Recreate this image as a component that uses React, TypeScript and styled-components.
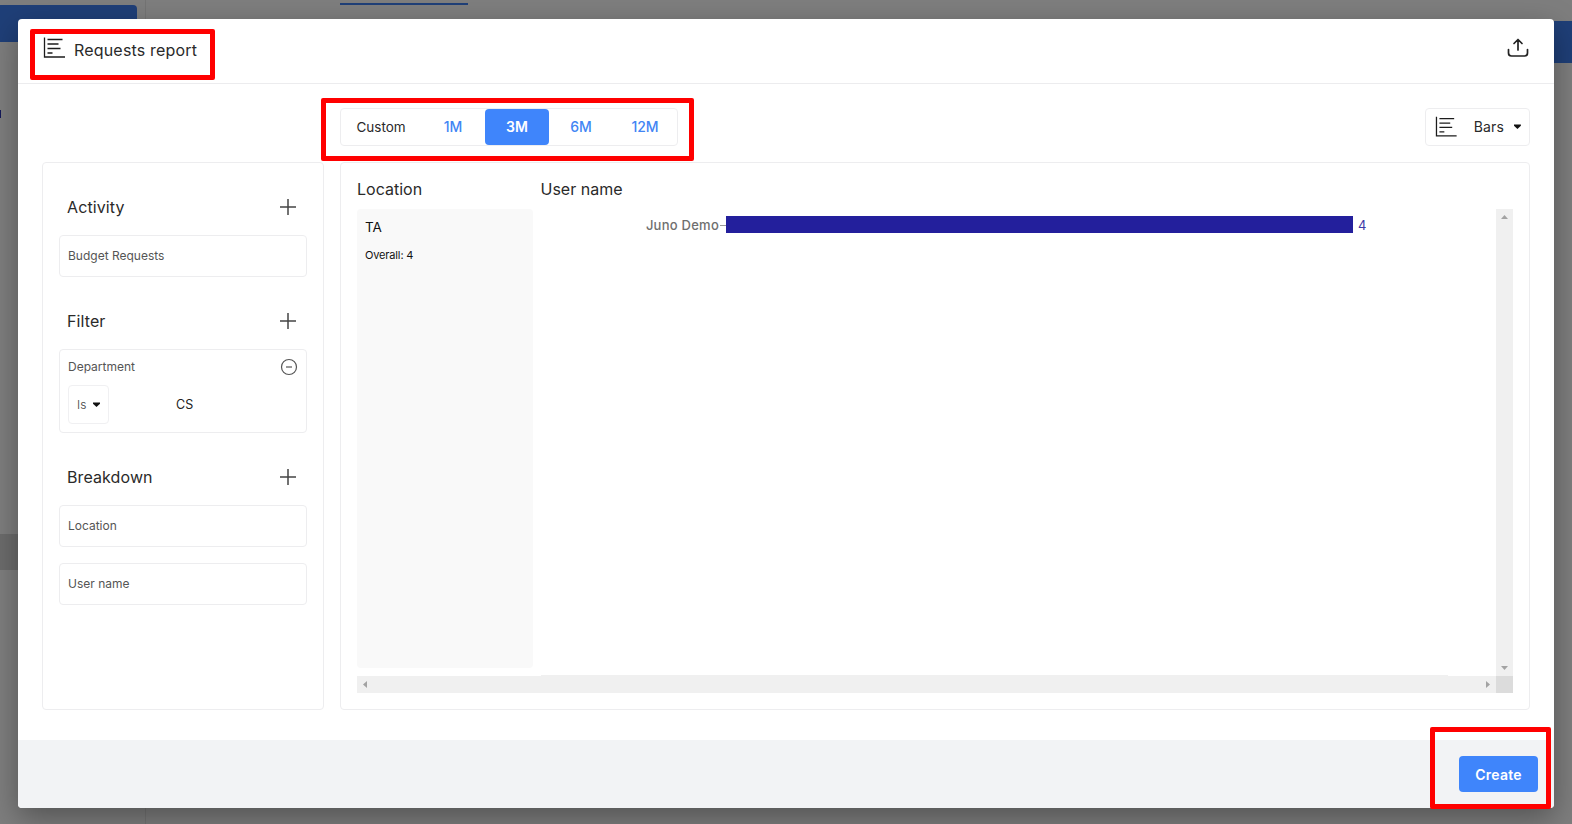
import React from "react";
import styled, { createGlobalStyle } from "styled-components";

const Global = createGlobalStyle`
  html, body { margin: 0; padding: 0; height: 100%; overflow: hidden; }
  body { font-family: Inter, "Liberation Sans", sans-serif; background: #7b7b7b; }
  * { box-sizing: border-box; }
`;

const Page = styled.div`
  position: relative;
  width: 1572px;
  height: 824px;
  display: flex;
  overflow: hidden;
  background: #7e7e7e;
`;
const BackSide = styled.div`
  width: 146px;
  height: 100%;
  padding-top: 5px;
  border-right: 1px solid #747474;
  flex: none;
  display: flex;
  flex-direction: column;
`;
const BackButton = styled.div`
  width: 137px;
  height: 37px;
  background: #1f3f78;
  border-radius: 0 4px 0 0;
`;
const BackDot = styled.div`
  width: 1px;
  height: 8px;
  margin-top: 68px;
  background: #141a5a;
`;
const BackBand = styled.div`
  margin-top: 416px;
  height: 36px;
  background: #6c6c6c;
`;
const BackMain = styled.div`
  flex: 1;
  padding: 3px 0 0 194px;
  display: flex;
  justify-content: space-between;
`;
const BackTab = styled.div`
  width: 128px;
  height: 2px;
  background: #1f3f78;
`;
const BackStrip = styled.div`
  width: 18px;
  height: 42px;
  margin-top: 18px;
  background: #1f3f78;
`;

const Overlay = styled.div`
  position: absolute;
  inset: 0;
  padding: 19px 18px 16px 18px;
  display: flex;
`;
const Modal = styled.div`
  width: 1536px;
  height: 789px;
  background: #fff;
  border-radius: 4px;
  box-shadow: 0 10px 30px rgba(0, 0, 0, 0.34);
  display: flex;
  flex-direction: column;
  overflow: hidden;
`;
const Header = styled.header`
  height: 65px;
  flex: none;
  border-bottom: 1px solid #ececee;
  padding: 0 25px 1px 25px;
  display: flex;
  align-items: center;
  justify-content: space-between;
`;
const TitleGroup = styled.div`
  display: flex;
  align-items: center;
  gap: 9px;
  margin-top: -2px;
`;
const TitleIcon = styled.span`
  display: flex;
  margin-top: -4px;
`;
const UploadButton = styled.span`
  display: flex;
  margin-top: -6px;
`;
const Title = styled.h1`
  margin: 0;
  font-size: 16px;
  font-weight: 400;
  letter-spacing: 0.18px;
  color: #2a2a2a;
`;
const Body = styled.main`
  flex: 1;
  padding: 24px 24px 30px 24px;
  display: flex;
  flex-direction: column;
  min-height: 0;
`;
const Controls = styled.div`
  height: 38px;
  flex: none;
  padding-left: 298px;
  display: flex;
  justify-content: space-between;
`;
const Toggle = styled.div`
  width: 338px;
  height: 38px;
  border: 1px solid #ededef;
  border-radius: 4px;
  display: flex;
`;
const ToggleItem = styled.div<{ $active?: boolean; $plain?: boolean }>`
  width: 64px;
  height: 36px;
  padding-bottom: 1px;
  display: flex;
  align-items: center;
  justify-content: center;
  font-size: 14px;
  font-weight: ${(p) => (p.$active ? 600 : 500)};
  border-radius: 4px;
  color: ${(p) => (p.$active ? "#fff" : p.$plain ? "#2a2a2a" : "#4285f4")};
  background: ${(p) => (p.$active ? "#3f85fb" : "transparent")};
  &:first-child { width: 80px; font-weight: 400; font-size: 13.5px; }
`;
const BarsSelect = styled.div`
  width: 105px;
  height: 38px;
  border: 1px solid #ededef;
  border-radius: 4px;
  padding: 0 8px 1px 9px;
  display: flex;
  align-items: center;
  font-size: 14px;
  letter-spacing: 0.2px;
  color: #2a2a2a;
`;
const BarsLabel = styled.span`
  margin-left: 17px;
  margin-right: 10px;
`;
const Columns = styled.div`
  margin-top: 16px;
  flex: 1;
  min-height: 0;
  display: flex;
  gap: 16px;
`;
const Card = styled.section`
  border: 1px solid #ededef;
  border-radius: 4px;
`;
const Sidebar = styled(Card)`
  width: 282px;
  flex: none;
  padding: 24px 16px 0 16px;
  display: flex;
  flex-direction: column;
`;
const SectionHead = styled.div<{ $gap?: number }>`
  height: 40px;
  margin-top: ${(p) => p.$gap ?? 0}px;
  padding: 0 10px 0 8px;
  display: flex;
  align-items: center;
  justify-content: space-between;
  font-size: 16px;
  color: #2a2a2a;
  letter-spacing: 0.1px;
`;
const Item = styled.div`
  height: 42px;
  margin-top: 8px;
  border: 1px solid #ededef;
  border-radius: 4px;
  padding: 0 8px 2px 8px;
  display: flex;
  align-items: center;
  font-size: 12px;
  color: #555;
`;
const Item2 = styled(Item)`
  margin-top: 16px;
`;
const FilterCard = styled.div`
  height: 84px;
  margin-top: 8px;
  border: 1px solid #ededef;
  border-radius: 4px;
  padding: 6px 8px 0 8px;
  font-size: 12px;
  color: #555;
`;
const FilterTop = styled.div`
  height: 21px;
  display: flex;
  align-items: center;
  justify-content: space-between;
`;
const FilterBottom = styled.div`
  margin-top: 8px;
  display: flex;
  align-items: center;
`;
const IsBox = styled.div`
  width: 41px;
  height: 39px;
  border: 1px solid #f0f0f2;
  border-radius: 4px;
  padding: 0 0 0 8px;
  display: flex;
  align-items: center;
  gap: 7px;
  font-size: 12px;
  font-weight: 300;
  color: #444;
`;
const FilterValue = styled.span`
  margin-left: 67px;
  margin-bottom: 1px;
  font-size: 12.5px;
  color: #222;
`;
const ChartCard = styled(Card)`
  flex: 1;
  min-width: 0;
  padding: 10px 16px 16px 16px;
  display: flex;
  flex-direction: column;
`;
const ChartHeads = styled.div`
  height: 32px;
  margin-bottom: 4px;
  flex: none;
  display: flex;
  align-items: center;
  font-size: 16px;
  color: #2a2a2a;
`;
const HeadLocation = styled.div`
  width: 183.5px;
`;
const ChartArea = styled.div`
  flex: 1;
  min-height: 0;
  display: grid;
  grid-template-columns: 1fr 17px;
  grid-template-rows: 1fr 17px;
`;
const ChartInner = styled.div`
  display: flex;
  min-height: 0;
  padding-bottom: 8px;
`;
const LocationBox = styled.div`
  width: 176px;
  flex: none;
  background: #f9f9f9;
  border-radius: 4px;
  padding: 9px 8px;
  color: #111;
`;
const LocName = styled.div`
  font-size: 13.5px;
  line-height: 18px;
`;
const LocOverall = styled.div`
  margin-top: 11px;
  font-size: 11px;
  line-height: 16px;
  letter-spacing: -0.15px;
`;
const ChartSvg = styled.svg`
  display: block;
  flex: none;
  margin-left: 8px;
`;
const ScrollV = styled.div`
  background: #f0f0f0;
  display: flex;
  flex-direction: column;
  justify-content: space-between;
  align-items: center;
  padding: 6px 0;
`;
const ScrollH = styled.div`
  position: relative;
  background: #f0f0f0;
  display: flex;
  justify-content: space-between;
  align-items: center;
  padding: 0 6px;
  &::before {
    content: "";
    position: absolute;
    left: 184px;
    right: 48px;
    top: -1px;
    height: 1px;
    background: #f0f0f0;
  }
`;
const Corner = styled.div`
  background: #dcdcdc;
`;
const Footer = styled.footer`
  height: 68px;
  flex: none;
  background: #f2f3f5;
  padding: 16px 16px 16px 0;
  display: flex;
  justify-content: flex-end;
`;
const CreateButton = styled.button`
  width: 79px;
  height: 36px;
  border: 0;
  border-radius: 4px;
  background: #3f85fb;
  color: #fff;
  font: 600 14px Inter, "Liberation Sans", sans-serif;
  letter-spacing: 0.2px;
`;
const Mark = styled.div<{ $x: number; $y: number; $w: number; $h: number }>`
  position: absolute;
  left: ${(p) => p.$x}px;
  top: ${(p) => p.$y}px;
  width: ${(p) => p.$w}px;
  height: ${(p) => p.$h}px;
  border: 5px solid #ff0000;
  border-radius: 2px;
  pointer-events: none;
`;

const ChartIcon = () => (
  <svg width="22" height="21" viewBox="0 0 22 21" fill="none" stroke="#1c1c1c" strokeWidth="1.3">
    <path d="M1.500 0.500v19.500h20.500" />
    <path d="M4.500 2.500h15M4.500 7h11M4.500 11.500h13M4.500 16h5" />
  </svg>
);
const Plus = () => (
  <svg width="18" height="18" viewBox="0 0 18 18" stroke="#444" strokeWidth="1.5">
    <path d="M9 1v16M1 9h16" />
  </svg>
);
const Minus = () => (
  <svg width="18" height="18" viewBox="0 0 18 18" fill="none" stroke="#555" strokeWidth="1.200">
    <circle cx="9" cy="9" r="7.500" />
    <path d="M6 9h6" />
  </svg>
);
const Upload = () => (
  <svg width="22" height="20" viewBox="0 0 22 20" fill="none" stroke="#222" strokeWidth="1.7" strokeLinecap="round" strokeLinejoin="round">
    <path d="M11 12V1.500M7 5.500l4-4 4 4" />
    <path d="M1.500 11.500v3.500a3 3 0 0 0 3 3h13a3 3 0 0 0 3-3v-3.500" />
  </svg>
);
const Caret = () => (
  <svg width="7" height="5" viewBox="0 0 7 5" fill="#111">
    <path d="M0 0.500h7v1.200L3.500 5 0 1.700z" />
  </svg>
);
const Arrow = ({ d }: { d: "up" | "down" | "left" | "right" }) => {
  const points = { up: "0,4 7,4 3.500,0", down: "0,0 7,0 3.500,4", left: "4,0 4,7 0,3.500", right: "0,0 0,7 4,3.500" }[d];
  const vertical = d === "up" || d === "down";
  return (
    <svg width={vertical ? 7 : 4} height={vertical ? 4 : 7} fill="#a3a3a3">
      <polygon points={points} />
    </svg>
  );
};

export default function App() {
  return (
    <Page>
      <Global />
      <BackSide>
        <BackButton />
        <BackDot />
        <BackBand />
      </BackSide>
      <BackMain>
        <BackTab />
        <BackStrip />
      </BackMain>
      <Overlay>
        <Modal>
          <Header>
            <TitleGroup>
              <TitleIcon>
                <ChartIcon />
              </TitleIcon>
              <Title>Requests report</Title>
            </TitleGroup>
            <UploadButton>
              <Upload />
            </UploadButton>
          </Header>
          <Body>
            <Controls>
              <Toggle>
                <ToggleItem $plain>Custom</ToggleItem>
                <ToggleItem>1M</ToggleItem>
                <ToggleItem $active>3M</ToggleItem>
                <ToggleItem>6M</ToggleItem>
                <ToggleItem>12M</ToggleItem>
              </Toggle>
              <BarsSelect>
                <ChartIcon />
                <BarsLabel>Bars</BarsLabel>
                <Caret />
              </BarsSelect>
            </Controls>
            <Columns>
              <Sidebar>
                <SectionHead>
                  Activity
                  <Plus />
                </SectionHead>
                <Item>Budget Requests</Item>
                <SectionHead $gap={24}>
                  Filter
                  <Plus />
                </SectionHead>
                <FilterCard>
                  <FilterTop>
                    Department
                    <Minus />
                  </FilterTop>
                  <FilterBottom>
                    <IsBox>
                      Is
                      <Caret />
                    </IsBox>
                    <FilterValue>CS</FilterValue>
                  </FilterBottom>
                </FilterCard>
                <SectionHead $gap={24}>
                  Breakdown
                  <Plus />
                </SectionHead>
                <Item>Location</Item>
                <Item2>User name</Item2>
              </Sidebar>
              <ChartCard>
                <ChartHeads>
                  <HeadLocation>Location</HeadLocation>
                  User name
                </ChartHeads>
                <ChartArea>
                  <ChartInner>
                    <LocationBox>
                      <LocName>TA</LocName>
                      <LocOverall>Overall: 4</LocOverall>
                    </LocationBox>
                    <ChartSvg width="955" height="60" viewBox="0 0 955 60">
                      <text x="178" y="21" textAnchor="end" fontFamily="Inter, sans-serif" fontSize="13" fontWeight="500" letterSpacing="0.25" fill="#6f6f6f">
                        Juno Demo
                      </text>
                      <path d="M179 16.500h6" stroke="#999" strokeWidth="1" />
                      <rect x="185" y="7" width="627" height="17" fill="#231f9c" />
                      <text x="817" y="21" fontFamily="Inter, sans-serif" fontSize="13" fontWeight="400" fill="#3d3aa8">
                        4
                      </text>
                    </ChartSvg>
                  </ChartInner>
                  <ScrollV>
                    <Arrow d="up" />
                    <Arrow d="down" />
                  </ScrollV>
                  <ScrollH>
                    <Arrow d="left" />
                    <Arrow d="right" />
                  </ScrollH>
                  <Corner />
                </ChartArea>
              </ChartCard>
            </Columns>
          </Body>
          <Footer>
            <CreateButton>Create</CreateButton>
          </Footer>
        </Modal>
      </Overlay>
      <Mark $x={30} $y={29} $w={185} $h={51} />
      <Mark $x={321} $y={98} $w={373} $h={63} />
      <Mark $x={1430} $y={727} $w={121} $h={82} />
    </Page>
  );
}
